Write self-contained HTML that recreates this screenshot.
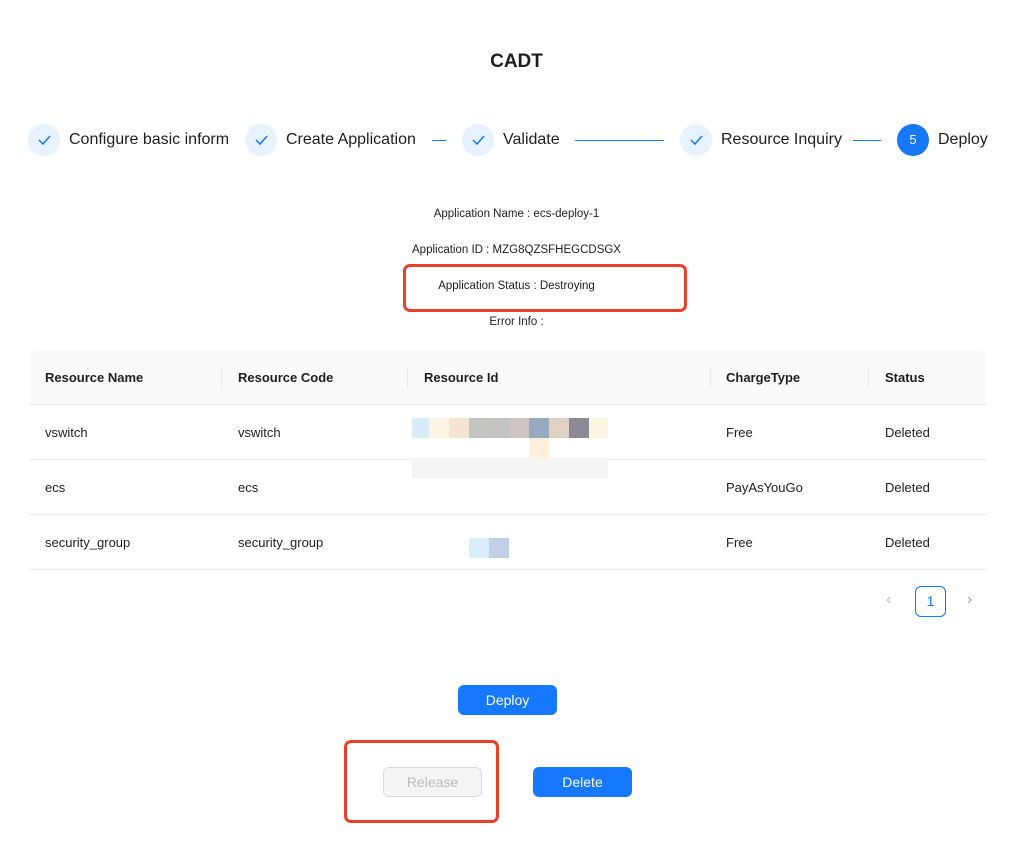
<!DOCTYPE html>
<html><head><style>
body{margin:0;width:1033px;height:867px;background:#fff;font-family:"Liberation Sans",sans-serif;position:relative;overflow:hidden;color:#1f1f1f}
.a{position:absolute}
.c{position:absolute;width:32px;height:32px;border-radius:50%;background:#e6f2ff;top:124px}
.st{position:absolute;top:130px;font-size:16px;line-height:20px;color:#1f1f1f}
.ln{position:absolute;top:140px;height:1px;background:#1677ff}
.info{position:absolute;font-size:11.5px;width:1033px;text-align:center;left:0}
.th{position:absolute;top:370px;font-size:13px;font-weight:bold}
.td{position:absolute;font-size:13px}
.hr{position:absolute;left:29px;width:958px;height:1px;background:#ececec}
.vd{position:absolute;top:366px;width:1px;height:22px;background:#eaeaea}
.btn{position:absolute;width:99px;height:30px;border-radius:6px;background:#1677ff;color:#fff;font-size:14px;text-align:center;line-height:30px}
.red{position:absolute;border:3px solid #e8402a;border-radius:7px}
.p{position:absolute;height:20px}
</style></head><body>
<div class="a" style="top:51px;left:0;width:1033px;text-align:center;font-size:19px;font-weight:bold">CADT</div>

<div class="c" style="left:28px"></div><div class="c" style="left:245px"></div><div class="c" style="left:462px"></div><div class="c" style="left:680px"></div>
<div class="c" style="left:897px;background:#1677ff;color:#fff;font-size:13px;text-align:center;line-height:32px">5</div>
<svg class="a" style="left:0;top:0" width="1033" height="200">
<g fill="none" stroke="#1677ff" stroke-width="1.5"><path d="M39 140l4 4 7-8"/><path d="M256 140l4 4 7-8"/><path d="M473 140l4 4 7-8"/><path d="M691 140l4 4 7-8"/></g></svg>
<div class="st" style="left:69px">Configure basic inform</div>
<div class="st" style="left:286px">Create Application</div>
<div class="ln" style="left:432px;width:14px"></div>
<div class="st" style="left:503px">Validate</div>
<div class="ln" style="left:575px;width:89px"></div>
<div class="st" style="left:721px">Resource Inquiry</div>
<div class="ln" style="left:853px;width:28px"></div>
<div class="st" style="left:938px">Deploy</div>

<div class="info" style="top:208px">Application Name : ecs-deploy-1</div>
<div class="info" style="top:244px">Application ID : MZG8QZSFHEGCDSGX</div>
<div class="info" style="top:280px">Application Status : Destroying</div>
<div class="info" style="top:316px">Error Info :</div>
<div class="red" style="left:403px;top:264px;width:278px;height:42px"></div>

<div class="a" style="left:29px;top:350px;width:958px;height:54px;background:#fafafa;border-radius:8px 8px 0 0"></div>
<div class="vd" style="left:221px"></div><div class="vd" style="left:407px"></div><div class="vd" style="left:710px"></div><div class="vd" style="left:868px"></div>
<div class="th" style="left:45px">Resource Name</div><div class="th" style="left:238px">Resource Code</div><div class="th" style="left:424px">Resource Id</div><div class="th" style="left:726px">ChargeType</div><div class="th" style="left:885px">Status</div>
<div class="hr" style="top:404px"></div><div class="hr" style="top:459px"></div><div class="hr" style="top:514px"></div><div class="hr" style="top:569px"></div>
<div class="td" style="left:45px;top:425px">vswitch</div><div class="td" style="left:238px;top:425px">vswitch</div><div class="td" style="left:726px;top:425px">Free</div><div class="td" style="left:885px;top:425px">Deleted</div>
<div class="td" style="left:45px;top:480px">ecs</div><div class="td" style="left:238px;top:480px">ecs</div><div class="td" style="left:726px;top:480px">PayAsYouGo</div><div class="td" style="left:885px;top:480px">Deleted</div>
<div class="td" style="left:45px;top:535px">security_group</div><div class="td" style="left:238px;top:535px">security_group</div><div class="td" style="left:726px;top:535px">Free</div><div class="td" style="left:885px;top:535px">Deleted</div>

<div class="a" style="left:412px;top:412px;width:196px;height:102px;background:#fff"></div>
<div class="p" style="left:412px;top:418px;width:17px;background:#d7ebfa"></div>
<div class="p" style="left:429px;top:418px;width:20px;background:#fdf5e4"></div>
<div class="p" style="left:449px;top:418px;width:20px;background:#f5e4d2"></div>
<div class="p" style="left:469px;top:418px;width:20px;background:#c4c5c0"></div>
<div class="p" style="left:489px;top:418px;width:20px;background:#c3c3c3"></div>
<div class="p" style="left:509px;top:418px;width:20px;background:#cfc5c4"></div>
<div class="p" style="left:529px;top:418px;width:20px;background:#93aabf"></div>
<div class="p" style="left:549px;top:418px;width:20px;background:#e2d0c5"></div>
<div class="p" style="left:569px;top:418px;width:20px;background:#8b8b95"></div>
<div class="p" style="left:589px;top:418px;width:19px;background:#fdf5e4"></div>
<div class="p" style="left:529px;top:438px;width:20px;background:#feeedb"></div>
<div class="p" style="left:412px;top:458px;width:196px;background:#f5f5f5"></div>
<div class="p" style="left:469px;top:538px;width:20px;background:#d9eefc"></div>
<div class="p" style="left:489px;top:538px;width:20px;background:#c3d0e6"></div>

<div class="a" style="left:886px;top:591px;color:#c0c0c0;font-size:16px">&#8249;</div>
<div class="a" style="left:915px;top:586px;width:29px;height:29px;border:1px solid #1677ff;border-radius:6px;color:#1677ff;text-align:center;line-height:29px;font-size:14px">1</div>
<div class="a" style="left:967px;top:591px;color:#a0a0a0;font-size:16px">&#8250;</div>

<div class="btn" style="left:458px;top:685px">Deploy</div>
<div class="btn" style="left:383px;top:767px;background:#f4f4f4;color:#bcbcbc;border:1px solid #d9d9d9;width:97px;height:28px;line-height:28px">Release</div>
<div class="btn" style="left:533px;top:767px">Delete</div>
<div class="red" style="left:344px;top:740px;width:149px;height:77px"></div>
</body></html>
